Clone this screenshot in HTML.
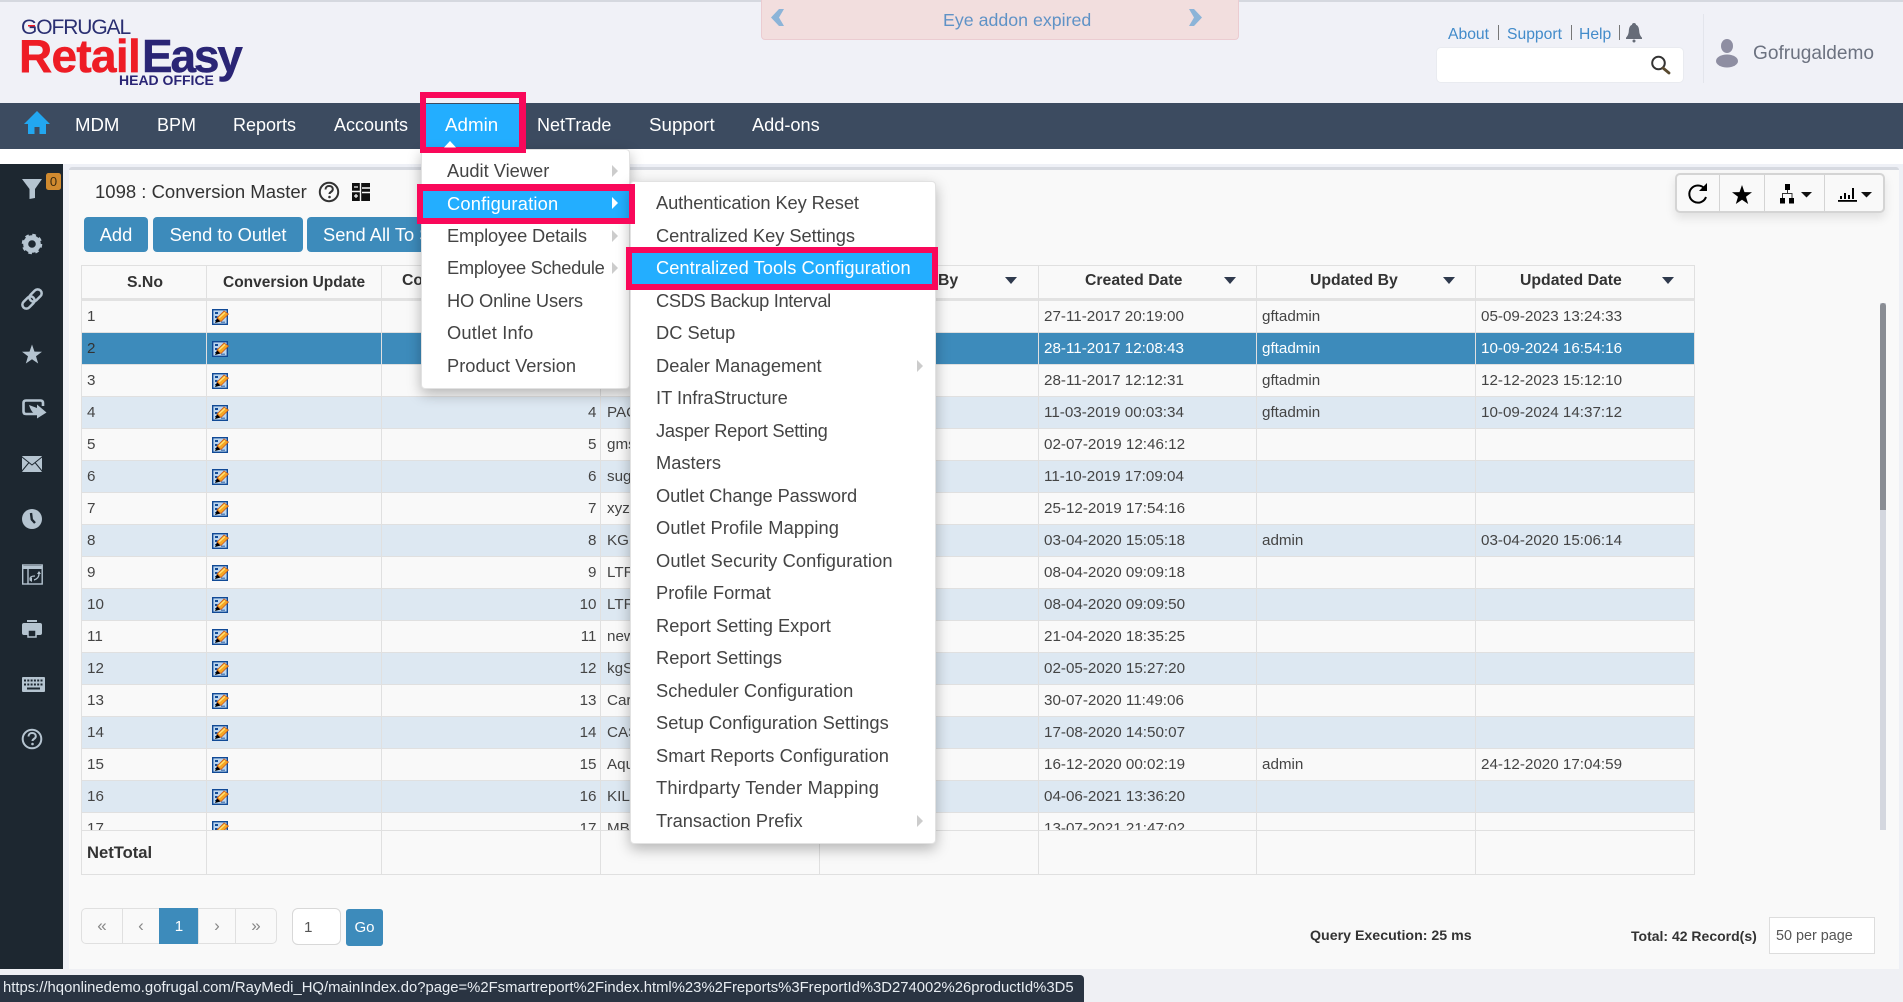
<!DOCTYPE html>
<html lang="en"><head><meta charset="utf-8"><title>Conversion Master</title>
<style>
*{box-sizing:border-box}
html,body{margin:0;padding:0;width:1903px;height:1002px;overflow:hidden;background:#eff0f4;font-family:"Liberation Sans",Arial,sans-serif;color:#333}
.a{position:absolute}
.t{position:absolute;white-space:nowrap;line-height:20px;height:20px}
#hdr{left:0;top:0;width:1903px;height:103px;background:#f0f1f7;border-top:2px solid #d5d8df}
#nav{left:0;top:103px;width:1903px;height:46px;background:#3c4b60}
#strip{left:0;top:149px;width:1903px;height:15px;background:#fff}
#side{left:0;top:164px;width:63px;height:805px;background:#1d2730}
#bg{left:63px;top:164px;width:1840px;height:805px;background:#eef0f6}
#panel{left:69px;top:167px;width:1830px;height:802px;background:#f9f9f9;border-top:3px solid #d6d9e0;border-radius:3px 3px 0 0}
.btn{position:absolute;top:217px;height:35px;background:#3d8bbb;color:#fff;border-radius:4px;font-size:18.3px;line-height:35px;text-align:center;white-space:nowrap;overflow:hidden}
#thead{left:81px;top:265px;width:1614px;height:36px;border:1px solid #e0e0e0;border-bottom:3px solid #e2e2e2;background:#f9f9f9}
.vl{position:absolute;width:1px;background:#e0e0e0}
.th{position:absolute;font-weight:bold;font-size:15.8px;color:#333;white-space:nowrap;line-height:20px}
.car{position:absolute;width:0;height:0;border-left:6px solid transparent;border-right:6px solid transparent;border-top:7px solid #2f3a4d}
#body{left:81px;top:301px;width:1614px;height:529px;overflow:hidden;border-left:1px solid #e0e0e0}
table{border-collapse:separate;border-spacing:0;table-layout:fixed;width:1613px}
td{height:32px;padding:0 6px;border-right:1px solid #e0e0e0;border-bottom:1px solid #e0e0e0;font-size:15.2px;color:#444;white-space:nowrap;overflow:hidden;background:#f9f9f9;line-height:31px}
td:first-child,td:nth-child(2),td:nth-child(n+6){padding-left:5px}
tr:nth-child(even) td{background:#dde8f2}
tr.sel td{background:#3d8bbb;color:#fff}
tr.sel td:first-child{color:#333}
td.r{text-align:right;padding-right:3.5px}
td svg{display:block;width:17px;height:16px;margin-top:1px;overflow:visible}
#foot{left:81px;top:830px;width:1614px;height:45px;border:1px solid #e0e0e0;background:#f9f9f9}
#scrollt{left:1880px;top:303px;width:6px;height:527px;background:#d4d7df}
#scrollh{left:1880px;top:303px;width:6px;height:207px;background:#8a8d94;border-radius:3px 3px 0 0}
.pg{position:absolute;top:908px;height:36px;border:1px solid #e0e0e0;text-align:center;line-height:33px;font-size:17px;color:#888;background:#f9f9f9}
.menu{position:absolute;background:#fff;border:1px solid #e2e2e2;border-radius:4px;box-shadow:0 5px 14px rgba(0,0,0,.28)}
.mi{position:absolute;white-space:nowrap;font-size:18.3px;line-height:22px;height:22px;color:#444}
.arr{position:absolute;width:0;height:0;border-top:6px solid transparent;border-bottom:6px solid transparent;border-left:6px solid #ccc}
.hl{position:absolute;background:#23aeff}
.rb{position:absolute;border:6px solid #f9085a}
#tb{left:1675px;top:173px;width:210px;height:40px;background:#f9f9f9;border:2px solid #d4d4d4;border-radius:5px;box-shadow:0 5px 10px rgba(0,0,0,.1)}
#status{left:0;top:975px;width:1084px;height:27px;background:#2a3442;color:#e8edf2;font-size:14.85px;line-height:27px;padding-left:3px;white-space:nowrap;border-radius:0 4px 0 0;overflow:hidden}
svg#ov{position:absolute;left:0;top:0;width:1903px;height:1002px;z-index:50;pointer-events:none}
</style></head><body>

<div class="a" id="hdr"></div>
<div class="a" id="nav"></div>
<div class="a" id="strip"></div>
<div class="a" id="bg"></div>
<div class="a" id="side"></div>
<div class="a" id="panel"></div>

<!-- Logo -->
<div class="t" style="left:21px;top:16px;height:24px;line-height:24px;font-size:21px;letter-spacing:-1.1px;color:#2a2f72">GOFRUGAL</div>
<div class="t" style="left:19px;top:30px;height:52px;line-height:52px;font-size:46px;font-weight:bold;letter-spacing:-.7px;color:#ee1c25;-webkit-text-stroke:.5px #ee1c25">Retail</div>
<div class="t" style="left:142px;top:30px;height:52px;line-height:52px;font-size:46px;font-weight:bold;letter-spacing:-2.2px;color:#2a2575;-webkit-text-stroke:.5px #2a2575">Easy</div>
<div class="t" style="left:119px;top:70px;font-size:14px;font-weight:bold;color:#2a2575">HEAD OFFICE</div>

<!-- Alert -->
<div class="a" style="left:761px;top:0;width:478px;height:40px;background:#f2dede;border:1px solid #ebccd1;border-top:0;border-radius:0 0 4px 4px"></div>
<div class="t" style="left:943px;top:10px;font-size:17.8px;color:#5f92c6">Eye addon expired</div>

<!-- Top right -->
<div class="t" style="left:1448px;top:25px;font-size:15.7px;color:#428bca">About</div>
<div class="t" style="left:1507px;top:25px;font-size:15.7px;color:#428bca">Support</div>
<div class="t" style="left:1579px;top:25px;font-size:15.7px;color:#428bca">Help</div>
<div class="vl" style="left:1498px;top:25px;height:15px;background:#777"></div>
<div class="vl" style="left:1571px;top:25px;height:15px;background:#777"></div>
<div class="vl" style="left:1619px;top:25px;height:15px;background:#777"></div>
<div class="a" style="left:1436px;top:47px;width:248px;height:36px;background:#fff;border:1px solid #e9ebf0;border-radius:5px"></div>
<div class="vl" style="left:1703px;top:14px;height:69px;background:#e3e5ec"></div>
<div class="t" style="left:1753px;top:44px;font-size:19.1px;color:#6c7280">Gofrugaldemo</div>

<!-- Nav -->
<div id="navt">
<div class="t" style="left:75px;top:115px;color:#fff;font-size:18.6px">MDM</div>
<div class="t" style="left:157px;top:115px;color:#fff;font-size:18px">BPM</div>
<div class="t" style="left:233px;top:115px;color:#fff;font-size:18px">Reports</div>
<div class="t" style="left:334px;top:115px;color:#fff;font-size:18px">Accounts</div>
<div class="a" style="left:426px;top:104px;width:93px;height:44px;background:#23aeff"></div>
<div class="t" style="left:445px;top:115px;color:#fff;font-size:18.8px;z-index:41">Admin</div>
<div class="t" style="left:537px;top:115px;color:#fff;font-size:18px">NetTrade</div>
<div class="t" style="left:649px;top:115px;color:#fff;font-size:18.8px">Support</div>
<div class="t" style="left:752px;top:115px;color:#fff;font-size:18.2px">Add-ons</div>
</div>

<!-- Title and buttons -->
<div class="t" style="left:95px;top:182px;font-size:18.5px;color:#333">1098 : Conversion Master</div>
<div class="btn" style="left:84px;width:64px">Add</div>
<div class="btn" style="left:153px;width:150px">Send to Outlet</div>
<div class="btn" style="left:307px;width:130px;text-align:left;padding-left:16px">Send All To Stores</div>

<div class="a" id="tb"></div>
<div class="vl" style="left:1719px;top:175px;height:36px;background:#d4d4d4"></div>
<div class="vl" style="left:1764px;top:175px;height:36px;background:#d4d4d4"></div>
<div class="vl" style="left:1824px;top:175px;height:36px;background:#d4d4d4"></div>

<!-- Table header -->
<div class="a" id="thead"></div>
<div class="vl" style="left:206px;top:265px;height:36px"></div>
<div class="vl" style="left:381px;top:265px;height:36px"></div>
<div class="vl" style="left:600px;top:265px;height:36px"></div>
<div class="vl" style="left:819px;top:265px;height:36px"></div>
<div class="vl" style="left:1038px;top:265px;height:36px"></div>
<div class="vl" style="left:1256px;top:265px;height:36px"></div>
<div class="vl" style="left:1475px;top:265px;height:36px"></div>
<div class="th" style="left:127px;top:273px">S.No</div>
<div class="th" style="left:223px;top:273px;font-size:15.5px">Conversion Update</div>
<div class="th" style="left:402px;top:271px">Co</div>
<div class="th" style="left:938px;top:271px">By</div>
<div class="car" style="left:1005px;top:277px"></div>
<div class="th" style="left:1085px;top:271px">Created Date</div>
<div class="car" style="left:1224px;top:277px"></div>
<div class="th" style="left:1310px;top:271px">Updated By</div>
<div class="car" style="left:1443px;top:277px"></div>
<div class="th" style="left:1520px;top:271px">Updated Date</div>
<div class="car" style="left:1662px;top:277px"></div>

<!-- Table body -->
<div class="a" id="body">
<svg width="0" height="0" style="position:absolute"><defs><symbol id="ed" viewBox="0 0 17 16" overflow="visible"><rect x=".7" y=".7" width="14.6" height="14.6" fill="#bcd6ee" stroke="#114a96" stroke-width="1.4"/><rect x="3" y="3" width="3" height="2" fill="#114a96"/><rect x="3" y="7" width="2.5" height="2" fill="#114a96"/><rect x="3" y="11" width="2" height="1" fill="#114a96"/><rect x="9" y="12.500" width="4" height="1.500" fill="#5b87bd"/><path d="M3 14L5 9 8.500 12.500z" fill="#000"/><path d="M5 9L12 2 16.500 5 9 12.500z" fill="#f6a623" stroke="#c9541a" stroke-width=".7"/><path d="M7 9L13 3.500" stroke="#ffe27a" stroke-width="1.300"/></symbol></defs></svg>
<table>
<colgroup><col style="width:125px"><col style="width:175px"><col style="width:219px"><col style="width:219px"><col style="width:219px"><col style="width:218px"><col style="width:219px"><col style="width:219px"></colgroup>
<tr><td>1</td><td><svg><use href="#ed"/></svg></td><td class="r">1</td><td></td><td></td><td>27-11-2017 20:19:00</td><td>gftadmin</td><td>05-09-2023 13:24:33</td></tr>
<tr class="sel"><td>2</td><td><svg><use href="#ed"/></svg></td><td class="r">2</td><td></td><td></td><td>28-11-2017 12:08:43</td><td>gftadmin</td><td>10-09-2024 16:54:16</td></tr>
<tr><td>3</td><td><svg><use href="#ed"/></svg></td><td class="r">3</td><td></td><td></td><td>28-11-2017 12:12:31</td><td>gftadmin</td><td>12-12-2023 15:12:10</td></tr>
<tr><td>4</td><td><svg><use href="#ed"/></svg></td><td class="r">4</td><td>PAC</td><td></td><td>11-03-2019 00:03:34</td><td>gftadmin</td><td>10-09-2024 14:37:12</td></tr>
<tr><td>5</td><td><svg><use href="#ed"/></svg></td><td class="r">5</td><td>gms</td><td></td><td>02-07-2019 12:46:12</td><td></td><td></td></tr>
<tr><td>6</td><td><svg><use href="#ed"/></svg></td><td class="r">6</td><td>sug</td><td></td><td>11-10-2019 17:09:04</td><td></td><td></td></tr>
<tr><td>7</td><td><svg><use href="#ed"/></svg></td><td class="r">7</td><td>xyz</td><td></td><td>25-12-2019 17:54:16</td><td></td><td></td></tr>
<tr><td>8</td><td><svg><use href="#ed"/></svg></td><td class="r">8</td><td>KG</td><td></td><td>03-04-2020 15:05:18</td><td>admin</td><td>03-04-2020 15:06:14</td></tr>
<tr><td>9</td><td><svg><use href="#ed"/></svg></td><td class="r">9</td><td>LTR</td><td></td><td>08-04-2020 09:09:18</td><td></td><td></td></tr>
<tr><td>10</td><td><svg><use href="#ed"/></svg></td><td class="r">10</td><td>LTR</td><td></td><td>08-04-2020 09:09:50</td><td></td><td></td></tr>
<tr><td>11</td><td><svg><use href="#ed"/></svg></td><td class="r">11</td><td>new</td><td></td><td>21-04-2020 18:35:25</td><td></td><td></td></tr>
<tr><td>12</td><td><svg><use href="#ed"/></svg></td><td class="r">12</td><td>kgS</td><td></td><td>02-05-2020 15:27:20</td><td></td><td></td></tr>
<tr><td>13</td><td><svg><use href="#ed"/></svg></td><td class="r">13</td><td>Car</td><td></td><td>30-07-2020 11:49:06</td><td></td><td></td></tr>
<tr><td>14</td><td><svg><use href="#ed"/></svg></td><td class="r">14</td><td>CAS</td><td></td><td>17-08-2020 14:50:07</td><td></td><td></td></tr>
<tr><td>15</td><td><svg><use href="#ed"/></svg></td><td class="r">15</td><td>Aqu</td><td></td><td>16-12-2020 00:02:19</td><td>admin</td><td>24-12-2020 17:04:59</td></tr>
<tr><td>16</td><td><svg><use href="#ed"/></svg></td><td class="r">16</td><td>KIL</td><td></td><td>04-06-2021 13:36:20</td><td></td><td></td></tr>
<tr><td>17</td><td><svg><use href="#ed"/></svg></td><td class="r">17</td><td>MB</td><td></td><td>13-07-2021 21:47:02</td><td></td><td></td></tr>
</table>
</div>

<!-- Footer -->
<div class="a" id="foot"></div>
<div class="vl" style="left:206px;top:830px;height:45px"></div>
<div class="vl" style="left:381px;top:830px;height:45px"></div>
<div class="vl" style="left:600px;top:830px;height:45px"></div>
<div class="vl" style="left:819px;top:830px;height:45px"></div>
<div class="vl" style="left:1038px;top:830px;height:45px"></div>
<div class="vl" style="left:1256px;top:830px;height:45px"></div>
<div class="vl" style="left:1475px;top:830px;height:45px"></div>
<div class="t" style="left:87px;top:843px;font-size:16.6px;font-weight:bold;color:#333">NetTotal</div>

<div class="a" id="scrollt"></div>
<div class="a" id="scrollh"></div>

<!-- Pagination -->
<div class="pg" style="left:81px;width:42px;border-radius:5px 0 0 5px">«</div>
<div class="pg" style="left:122px;width:38px">‹</div>
<div class="pg" style="left:159px;width:40px;background:#3d8bbb;border-color:#3d8bbb;color:#fff;font-size:15.2px;line-height:35px">1</div>
<div class="pg" style="left:198px;width:38px">›</div>
<div class="pg" style="left:235px;width:42px;border-radius:0 5px 5px 0">»</div>
<div class="a" style="left:292px;top:908px;width:49px;height:37px;background:#fff;border:1px solid #d8d8d8;border-radius:6px"></div>
<div class="t" style="left:304px;top:918px;font-size:15.2px;color:#555">1</div>
<div class="a" style="left:346px;top:909px;width:37px;height:37px;background:#3d8bbb;border-radius:3px;color:#fff;font-size:15px;line-height:37px;text-align:center">Go</div>
<div class="t" style="left:1310px;top:926px;font-size:14.2px;font-weight:bold;color:#333">Query Execution: 25 ms</div>
<div class="t" style="left:1631px;top:926px;font-size:14px;font-weight:bold;color:#333">Total: 42 Record(s)</div>
<div class="a" style="left:1769px;top:917px;width:106px;height:37px;background:#fff;border:1px solid #ddd;font-size:14.4px;line-height:37px;padding-left:6px;color:#555;white-space:nowrap">50 per page</div>

<!-- Menus -->
<div class="menu" style="left:421px;top:149px;width:209px;height:240px;z-index:30"></div>
<div style="position:absolute;z-index:32;left:0;top:0">
<div class="mi" style="left:447px;top:160px">Audit Viewer</div>
<div class="arr" style="left:612px;top:165px"></div>
<div class="hl" style="left:423px;top:190px;width:206px;height:28px"></div>
<div class="mi" style="left:447px;top:193px;color:#fff;letter-spacing:.2px">Configuration</div>
<div class="arr" style="left:612px;top:197px;border-left-color:#fff"></div>
<div class="mi" style="left:447px;top:225px;letter-spacing:-.15px">Employee Details</div>
<div class="arr" style="left:612px;top:230px"></div>
<div class="mi" style="left:447px;top:257px;letter-spacing:-.3px">Employee Schedule</div>
<div class="arr" style="left:612px;top:262px"></div>
<div class="mi" style="left:447px;top:290px;letter-spacing:-.15px">HO Online Users</div>
<div class="mi" style="left:447px;top:322px;letter-spacing:.2px">Outlet Info</div>
<div class="mi" style="left:447px;top:355px">Product Version</div>
</div>

<div class="menu" style="left:630px;top:181px;width:306px;height:663px;z-index:33"></div>
<div style="position:absolute;z-index:35;left:0;top:0">
<div class="mi" style="left:656px;top:192px;letter-spacing:-.1px">Authentication Key Reset</div>
<div class="mi" style="left:656px;top:225px;letter-spacing:-.05px">Centralized Key Settings</div>
<div class="hl" style="left:631px;top:253px;width:302px;height:31px"></div>
<div class="mi" style="left:656px;top:257px;color:#fff;letter-spacing:.03px">Centralized Tools Configuration</div>
<div class="mi" style="left:656px;top:290px;letter-spacing:-.35px">CSDS Backup Interval</div>
<div class="mi" style="left:656px;top:322px">DC Setup</div>
<div class="mi" style="left:656px;top:355px">Dealer Management</div>
<div class="arr" style="left:917px;top:360px"></div>
<div class="mi" style="left:656px;top:387px">IT InfraStructure</div>
<div class="mi" style="left:656px;top:420px;letter-spacing:-.25px">Jasper Report Setting</div>
<div class="mi" style="left:656px;top:452px">Masters</div>
<div class="mi" style="left:656px;top:485px;letter-spacing:-.1px">Outlet Change Password</div>
<div class="mi" style="left:656px;top:517px;letter-spacing:.1px">Outlet Profile Mapping</div>
<div class="mi" style="left:656px;top:550px;letter-spacing:.1px">Outlet Security Configuration</div>
<div class="mi" style="left:656px;top:582px">Profile Format</div>
<div class="mi" style="left:656px;top:615px">Report Setting Export</div>
<div class="mi" style="left:656px;top:647px">Report Settings</div>
<div class="mi" style="left:656px;top:680px;letter-spacing:.05px">Scheduler Configuration</div>
<div class="mi" style="left:656px;top:712px">Setup Configuration Settings</div>
<div class="mi" style="left:656px;top:745px;letter-spacing:.05px">Smart Reports Configuration</div>
<div class="mi" style="left:656px;top:777px;letter-spacing:.2px">Thirdparty Tender Mapping</div>
<div class="mi" style="left:656px;top:810px">Transaction Prefix</div>
<div class="arr" style="left:917px;top:815px"></div>
</div>

<!-- Annotation boxes -->
<div class="rb" style="left:420px;top:92px;width:106px;height:61px;z-index:40;border-width:6px 7px 6px 6px"></div>
<div class="rb" style="left:417px;top:184px;width:218px;height:40px;z-index:40;border-width:7px 6px 6px 6px"></div>
<div class="rb" style="left:626px;top:247px;width:312px;height:43px;z-index:40"></div>

<!-- Status bubble -->
<div class="a" id="status" style="z-index:45">https://hqonlinedemo.gofrugal.com/RayMedi_HQ/mainIndex.do?page=%2Fsmartreport%2Findex.html%23%2Freports%3FreportId%3D274002%26productId%3D5</div>

<!-- Icons -->
<svg id="ov" viewBox="0 0 1903 1002">
<rect x="28" y="25" width="7" height="1.5" fill="#ee1c25"/>
<path d="M784 9l-5 8.500 5 8.500h-5l-8-8.500 8-8.500z" fill="#8cb4d8"/>
<path d="M1189 9l5 8.500-5 8.500h5l8-8.500-8-8.500z" fill="#8cb4d8"/>
<path d="M1634 23c1.300 0 2 .8 2 1.800 2.500 1 3 3.500 3.200 6.200.2 3 1 4.800 2.800 6.700v1.300h-16v-1.300c1.800-1.900 2.600-3.700 2.800-6.700.2-2.700.7-5.200 3.200-6.200 0-1 .7-1.800 2-1.800z" fill="#666c78"/>
<circle cx="1634" cy="41" r="1.5" fill="#666c78"/>
<circle cx="1658.500" cy="63" r="6.300" fill="none" stroke="#333" stroke-width="2"/>
<path d="M1663 68l6 5" stroke="#5a4a30" stroke-width="2.800" stroke-linecap="round"/>
<ellipse cx="1727" cy="46" rx="6" ry="7" fill="#8e8ea2"/>
<ellipse cx="1727" cy="61" rx="11" ry="6.500" fill="#8e8ea2"/>
<path d="M37 111L24 124h4v10h6.500v-7h5v7H46v-10h4z" fill="#22a7f0"/>
<path d="M450 141l-6 6.500h12z" fill="#fff"/>
<g fill="#b5c4d0">
<path d="M22 179h20l-7 10v9l-5.500 1v-10z"/>
<g transform="translate(32 244)"><circle r="6.300" fill="none" stroke="#b5c4d0" stroke-width="5"/><circle r="9" fill="none" stroke="#b5c4d0" stroke-width="2.500" stroke-dasharray="3.600 3.470"/></g>
<g transform="translate(32 299) rotate(-45)" fill="none" stroke="#b5c4d0" stroke-width="2.500"><rect x="-12" y="-4" width="14" height="8" rx="4"/><rect x="-2" y="-4" width="14" height="8" rx="4"/></g>
<path transform="translate(32 355)" d="M0-10.500L2.470-3.400 9.990-3.240 4 1.300 6.170 8.490 0 4.200-6.170 8.490-4 1.300-9.990-3.240-2.470-3.400z"/>
<path d="M37 414H26q-2.500 0-2.500-2.500V403q0-2.500 2.500-2.500h14.500q2.500 0 2.500 2.500v3" fill="none" stroke="#b5c4d0" stroke-width="2.600"/>
<path d="M29 405l8 3v-3.500l9.500 8-9.500 6v-4c-3 0-6-3-8-9.500z"/>
<rect x="22" y="456" width="20" height="16" rx="1"/>
<path d="M22 457l10 8 10-8M22 471l7-8.500M42 471l-7-8.500" fill="none" stroke="#1d2730" stroke-width="1"/>
<circle cx="32" cy="519" r="10"/>
<path d="M31 513l.8 6.500 3.200 3.500" fill="none" stroke="#1d2730" stroke-width="2.400"/>
<rect x="22.700" y="565" width="19.500" height="19" fill="none" stroke="#b5c4d0" stroke-width="1.400"/>
<rect x="23" y="566" width="19" height="3"/>
<path d="M28 569v15" stroke="#b5c4d0" stroke-width="1.400"/>
<path d="M30 579c0-2 1-3 5-3M39 572v2c0 3-2 5-5 6" fill="none" stroke="#b5c4d0" stroke-width="1.300"/>
<path d="M29 580l3-3v5zM37 574l2-3 2 3z"/>
<rect x="27" y="620" width="10" height="2"/>
<rect x="22" y="623" width="20" height="12" rx="2"/>
<rect x="28" y="630" width="8" height="7" fill="#1d2730" stroke="#b5c4d0" stroke-width="1.5"/>
<rect x="22" y="677" width="23" height="15" rx="1"/>
<path d="M24 680.500h19M24 684.500h19" stroke="#1d2730" stroke-width="2" stroke-dasharray="2 1.300"/>
<path d="M27 688.500h13" stroke="#1d2730" stroke-width="2"/>
<circle cx="32" cy="739" r="9.300" fill="none" stroke="#b5c4d0" stroke-width="2"/>
<path d="M28.500 736.500c0-2.200 1.500-3.500 3.600-3.500 2.300 0 3.700 1.300 3.700 3.200 0 2.700-3.300 2.600-3.300 4.800" fill="none" stroke="#b5c4d0" stroke-width="2"/>
<circle cx="32.500" cy="744" r="1.3"/>
</g>
<rect x="46" y="173" width="15" height="17" rx="2.5" fill="#d08a2f"/>
<text x="53.500" y="186" font-family="Liberation Sans, sans-serif" font-size="13" text-anchor="middle" fill="#3a2a10">0</text>
<circle cx="329" cy="192" r="9.200" fill="none" stroke="#333" stroke-width="2"/>
<path d="M325.500 189.500c0-2.200 1.500-3.500 3.600-3.500 2.300 0 3.700 1.300 3.700 3.200 0 2.700-3.300 2.600-3.300 4.800" fill="none" stroke="#333" stroke-width="2"/>
<circle cx="329.500" cy="197" r="1.3" fill="#333"/>
<rect x="352" y="183" width="18" height="18" fill="#111"/>
<path d="M360.500 183v18M352 191.500h8M362 188h8M362 192.500h8" stroke="#f9f9f9" stroke-width="1.4"/>
<path d="M354 187h4M354 196h4M356 194v4" stroke="#f9f9f9" stroke-width="1.2"/>
<path d="M1704.500 188.500A8.600 8.600 0 1 0 1706 197" fill="none" stroke="#000" stroke-width="2"/>
<path d="M1699 191h8v-8z" fill="#000"/>
<path transform="translate(1742 195.500)" d="M0-10.500L2.470-3.400 9.990-3.240 4 1.300 6.170 8.490 0 4.200-6.170 8.490-4 1.300-9.990-3.240-2.470-3.400z" fill="#000"/>
<rect x="1785" y="184" width="5" height="6" fill="#000"/>
<rect x="1780" y="198" width="5" height="5.500" fill="#000"/>
<rect x="1789" y="198" width="5" height="5.500" fill="#000"/>
<path d="M1787.500 190v3M1782.500 198v-4.500h9.500v4.500" fill="none" stroke="#333" stroke-width="1"/>
<path d="M1801 192h11l-5.500 5.500z" fill="#111"/>
<rect x="1838" y="200" width="19" height="1.8" fill="#000"/>
<rect x="1840" y="196" width="2" height="3" fill="#000"/>
<rect x="1844" y="193" width="2" height="6" fill="#000"/>
<rect x="1848" y="195" width="2" height="4" fill="#000"/>
<rect x="1852" y="188" width="2" height="11" fill="#000"/>
<path d="M1861 192h11l-5.500 5.500z" fill="#111"/>
</svg>
</body></html>
